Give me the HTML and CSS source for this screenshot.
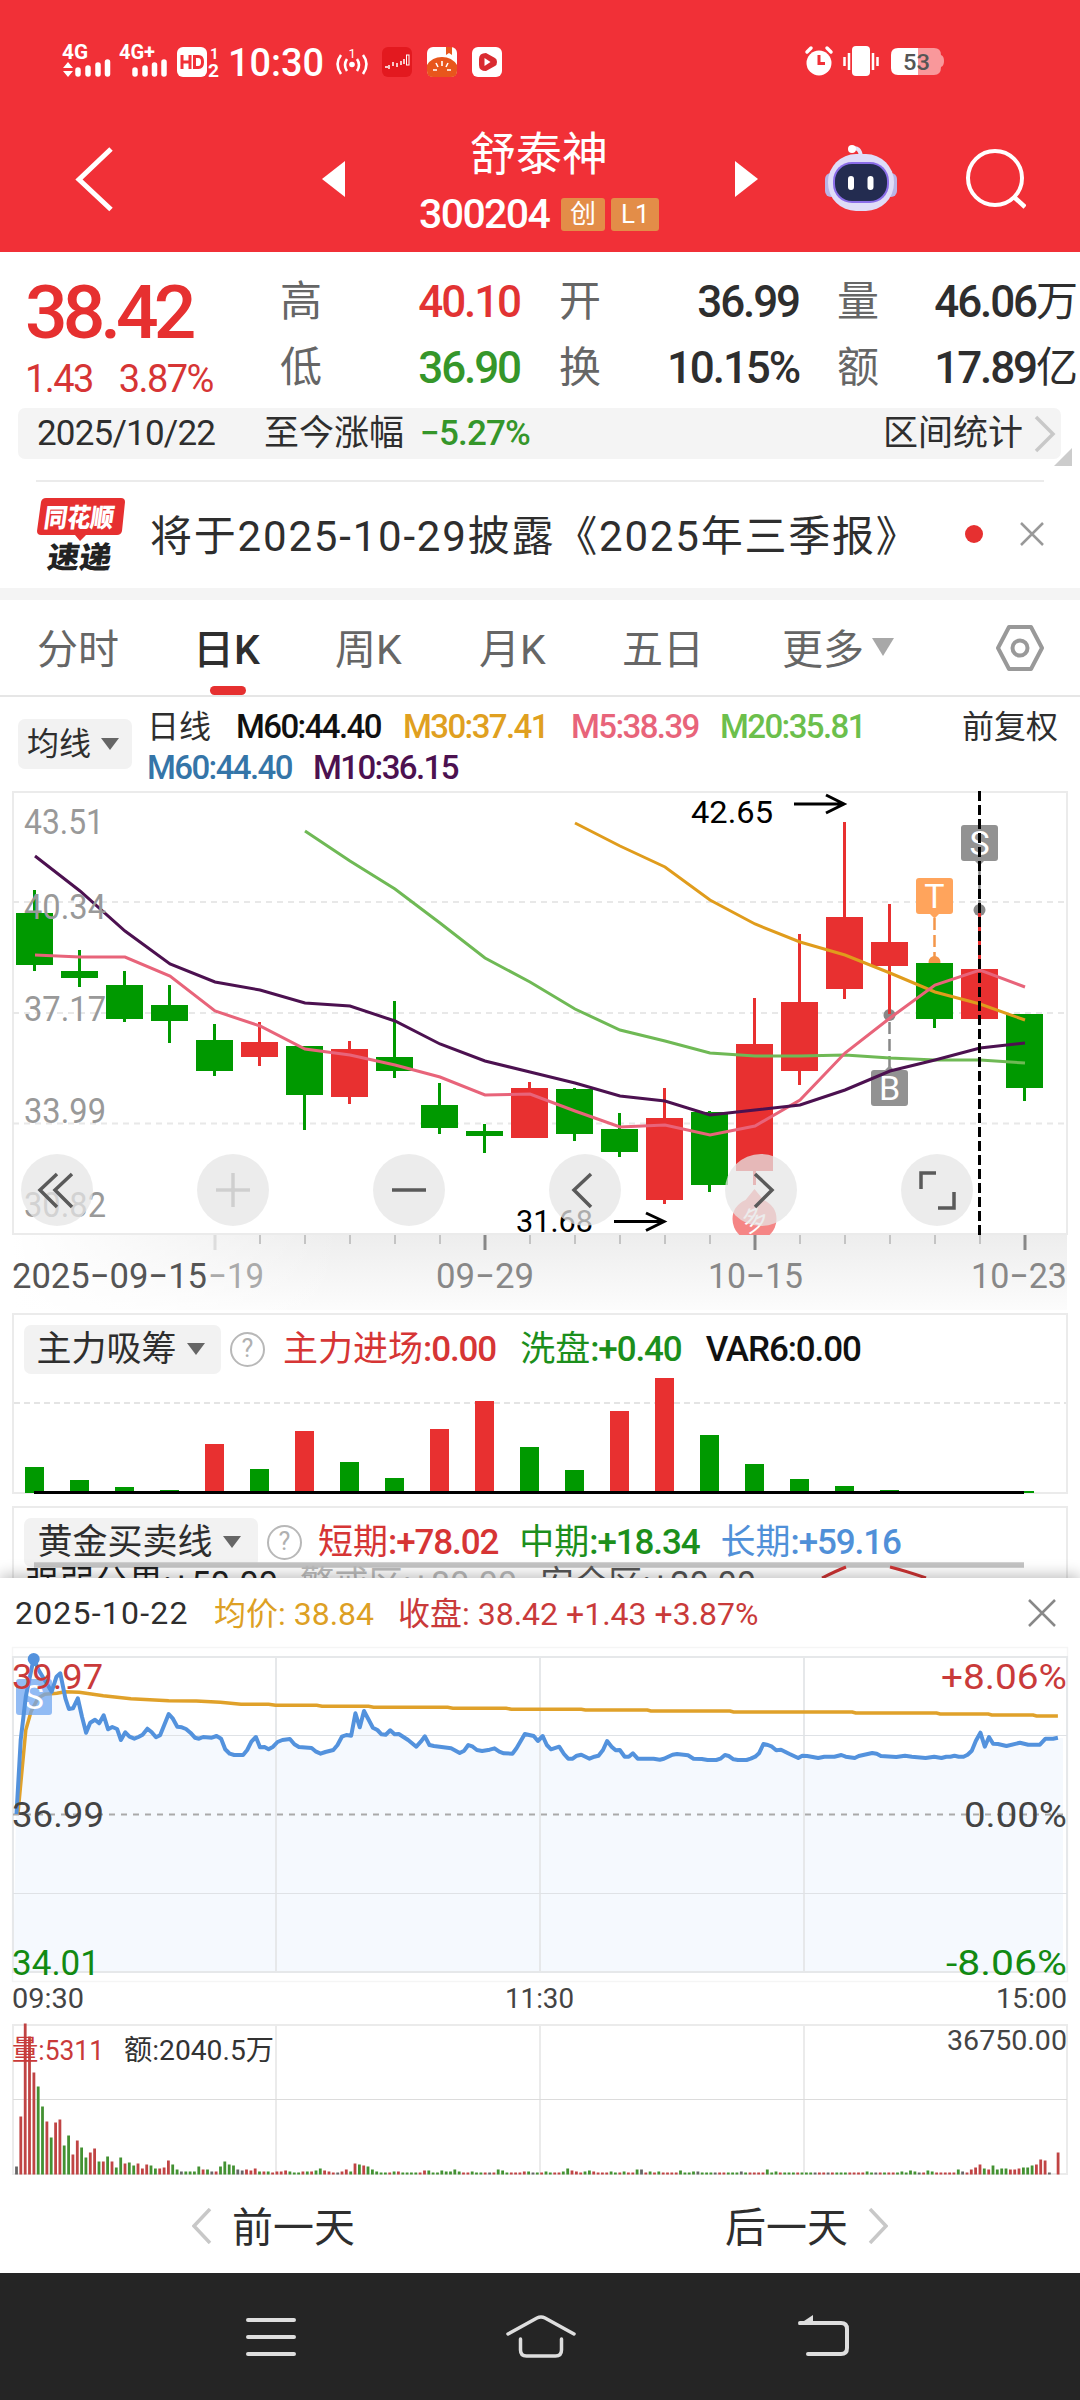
FILE: index.html
```html
<!DOCTYPE html>
<html lang="zh-CN">
<head>
    <meta charset="UTF-8">
    <meta name="viewport" content="width=device-width, initial-scale=1.0">
    <title>舒泰神 300204</title>
    <link rel="stylesheet" href="styles.css">
</head>
<body>
    <header class="top">
        <div class="status-bar">
            <svg class="status-left" viewBox="60 30 450 60" width="450" height="60">
                <g fill="#fff" font-weight="700" font-size="20">
                    <text x="62" y="58" textLength="26" lengthAdjust="spacingAndGlyphs">4G</text>
                    <text x="119" y="58" textLength="36" lengthAdjust="spacingAndGlyphs">4G+</text>
                </g>
                <path fill="#fff" d="M63 67l5-6 5 6zM63 70h10l-5 6z"/>
                <path stroke="#fff" stroke-width="5.500" stroke-linecap="round" d="M78 69v4M88 67v6M98 64v9M107.500 61v12M135 69v4M145 67v6M154.500 64v9M164 61v12"/>
                <rect x="177" y="46" width="30" height="30" rx="6" fill="#fff"/>
                <path fill="none" stroke="#f13037" stroke-width="3" d="M182 54v14M182 61h7M190 54v14M194.500 55.500h4q4 0 4 5.500t-4 5.500h-4z"/>
                <text x="210" y="58" font-size="15" font-weight="700" fill="#fff">1</text>
                <text x="208" y="76" font-size="19" font-weight="700" fill="#fff" textLength="11" lengthAdjust="spacingAndGlyphs">2</text>
                <text x="228" y="75" font-size="39" font-weight="500" fill="#fff" textLength="96" lengthAdjust="spacingAndGlyphs">10:30</text>
                <g fill="none" stroke="#fff" stroke-width="2.600">
                    <path d="M341 54q-7 9 0 19M347 58q-4 6 0 12M363 54q7 9 0 19M357 58q4 6 0 12"/>
                </g>
                <circle cx="352" cy="63.500" r="2.800" fill="#fff"/>
                <text x="348.500" y="57" font-size="13" fill="#fff">1</text>
                <rect x="382" y="46" width="30" height="30" rx="6" fill="#e3191f"/>
                <path fill="none" stroke="#fff" stroke-width="1.500" d="M385 66h3M389 64v4M393 61v4M397 62v4M401 60v4M404 58v5"/>
                <rect x="406.500" y="54" width="2.500" height="10" fill="none" stroke="#fff"/>
                <rect x="427" y="46" width="30" height="30" rx="6" fill="#fff"/>
                <path fill="#e8561c" d="M427 64q5-8 15-8t15 8v6q0 6-6 6h-18q-6 0-6-6zM446 46h6v8l-3-2-3 2z"/>
                <path fill="none" stroke="#fff" stroke-width="1.600" d="M442 60v5M436 62l2 4M448 62l-2 4M433 69h4M447 69h4"/>
                <rect x="472" y="46" width="30" height="30" rx="6" fill="#fff"/>
                <path fill="#d92b30" d="M486 52l9 5q2 1 2 4t-2 4l-9 5q-7 0-7-6v-6q0-6 7-6z"/>
                <path fill="#fff" d="M484.500 57l6 4-6 4z"/>
            </svg>
            <svg viewBox="800 40 150 42" width="150" height="42">
                <circle cx="819" cy="63" r="12.500" fill="#fff"/>
                <path fill="none" stroke="#fff" stroke-width="3.500" stroke-linecap="round" d="M807 52l4-4M831 52l-4-4"/>
                <path fill="none" stroke="#f13037" stroke-width="3" d="M819 55v8.500h6"/>
                <rect x="852" y="46" width="18" height="30" rx="4" fill="#fff"/>
                <path stroke="#fff" stroke-width="2.500" d="M849 53v17M844.500 57v9M873 53v17M877.500 57v9"/>
                <path fill="#f9989b" d="M917 48h17q7 0 7 7 3 1 3 6t-3 6q0 8-7 8h-17z"/>
                <path fill="#fff" d="M898 48h20v27h-20q-7 0-7-7v-13q0-7 7-7z"/>
                <text x="903" y="69.500" font-size="22" font-weight="500" fill="#555" textLength="27" lengthAdjust="spacingAndGlyphs">53</text>
            </svg>
        </div>
        <div class="title-bar">
            <svg width="40" height="66" viewBox="75 144 40 66"><path fill="none" stroke="#fff" stroke-width="5" d="M111 147L79 177.500l32 30"/></svg>
            <svg width="24" height="38" viewBox="322 161 24 38"><path fill="#fff" d="M345 162v36l-23-18z"/></svg>
            <div class="title">
                <h1>舒泰神</h1>
                <div class="code">
                    <span class="num">300204</span>
                    <i class="tag">创</i>
                    <i class="tag tag-l1">L1</i>
                </div>
            </div>
            <svg width="24" height="38" viewBox="735 161 24 38"><path fill="#fff" d="M735 162v36l23-18z"/></svg>
            <svg class="robot" width="74" height="70" viewBox="825 143 74 70">
                <path fill="none" stroke="#e4e4fa" stroke-width="4" d="M852 148q8-3 9 8"/>
                <circle cx="852" cy="148" r="4" fill="#fff"/>
                <rect x="825" y="172" width="12" height="24" rx="6" fill="#b9b4e6"/>
                <rect x="885" y="172" width="12" height="24" rx="6" fill="#b9b4e6"/>
                <rect x="828" y="153" width="66" height="57" rx="28" fill="#dfdcf8"/>
                <rect x="833" y="161" width="56" height="41" rx="19" fill="#8a6de8"/>
                <rect x="835" y="163" width="52" height="37" rx="17" fill="#232c50"/>
                <path stroke="#fff" stroke-width="6" stroke-linecap="round" d="M851 178v8M870.500 178v8"/>
            </svg>
            <svg width="62" height="64" viewBox="963 148 62 64"><circle cx="994" cy="179" r="27" fill="none" stroke="#fff" stroke-width="4"/><path stroke="#fff" stroke-width="4.500" d="M1013 198l11 10"/></svg>
        </div>
    </header>

    <section class="quote">
        <div class="price">
            <b>38.42</b>
            <p><span>1.43</span><span>3.87%</span></p>
        </div>
        <div class="stats">
            <label>高</label><span class="up">40.10</span>
            <label>开</label><span>36.99</span>
            <label>量</label><span>46.06<em>万</em></span>
            <label>低</label><span class="down">36.90</span>
            <label>换</label><span>10.15%</span>
            <label>额</label><span>17.89<em>亿</em></span>
        </div>
    </section>

    <div class="range">
        <span class="range-date">2025/10/22</span>
        <span class="range-label">至今涨幅</span>
        <span class="range-value down">−5.27%</span>
        <span class="range-link">区间统计</span>
        <svg width="22" height="38" viewBox="0 0 22 38"><path fill="none" stroke="#c8c8c8" stroke-width="3.500" d="M2 2l17 17L2 36"/></svg>
        <i class="corner"></i>
    </div>

    <div class="notice">
        <svg class="notice-logo" width="90" height="76" viewBox="36 496 90 76">
            <path fill="#e63030" d="M46 498h75q4 0 4 4l-3 29q-1 4-5 4H86l-6 6-5-6H41q-4 0-4-4l4-29q1-4 5-4z"/>
            <g transform="skewX(-8)" font-weight="900">
                <text x="117" y="527" font-size="26" fill="#fff" textLength="70" lengthAdjust="spacingAndGlyphs">同花顺</text>
                <text x="126" y="568" font-size="30" fill="#222" textLength="64" lengthAdjust="spacingAndGlyphs">速递</text>
            </g>
        </svg>
        <p>将于2025-10-29披露《2025年三季报》</p>
        <i class="dot"></i>
        <svg width="24" height="24" viewBox="0 0 24 24"><path stroke="#999" stroke-width="2.500" d="M1 1l22 22M23 1L1 23"/></svg>
    </div>

    <nav class="tabs">
        <a>分时</a>
        <a class="active">日K</a>
        <a>周K</a>
        <a>月K</a>
        <a>五日</a>
        <a>更多<i class="caret"></i></a>
        <svg width="50" height="48" viewBox="0 0 50 48"><path fill="none" stroke="#999" stroke-width="4" stroke-linejoin="round" d="M14 3h22l11 21-11 21H14L3 24z"/><circle cx="25" cy="24" r="7.500" fill="none" stroke="#999" stroke-width="4"/></svg>
    </nav>

    <div class="ma-legend">
        <button class="pick">均线<i class="caret"></i></button>
        <div class="ma-list">
            <span class="plain">日线</span>
            <span class="black">M60:44.40</span>
            <span class="gold">M30:37.41</span>
            <span class="pink">M5:38.39</span>
            <span class="lime">M20:35.81</span>
            <span class="plain adjust">前复权</span>
            <span class="blue">M60:44.40</span>
            <span class="purple">M10:36.15</span>
        </div>
    </div>

    <section class="kline">
        <svg id="kline" viewBox="0 790 1080 522" width="1080" height="522">
            <defs>
                <linearGradient id="axisBg" x1="0" y1="0" x2="0" y2="1"><stop offset="0" stop-color="#ededed"/><stop offset="1" stop-color="#fcfcfc"/></linearGradient>
                <linearGradient id="axisFade"><stop offset="0" stop-color="#fff"/><stop offset="1" stop-color="#fff" stop-opacity="0"/></linearGradient>
                <clipPath id="plot"><rect x="13" y="790" width="1054" height="445"/></clipPath>
            </defs>
            <rect x="13" y="1234" width="1054" height="76" fill="url(#axisBg)"/>
            <rect x="12" y="1235" width="330" height="76" fill="url(#axisFade)"/>
            <rect x="13" y="792" width="1054" height="442" fill="#fff" stroke="#ebebeb" stroke-width="2"/>
            <path stroke="#e8e8e8" stroke-width="2" stroke-dasharray="6 5" d="M13 902h1054M13 1013h1054M13 1123.500h1054"/>
            <g id="markers">
                <path stroke="#888" stroke-width="2.500" stroke-dasharray="12 5" d="M889.500 1022v46M979.500 866v42"/>
                <path stroke="#f4964a" stroke-width="2.500" stroke-dasharray="12 5" d="M934.500 918v42"/>
                <circle cx="889.500" cy="1015" r="6" fill="#888"/>
                <circle cx="979.500" cy="910" r="6" fill="#888"/>
                <circle cx="934.500" cy="962" r="6" fill="#f4964a"/>
                <path fill="#ffa45c" d="M919 878h31q3 0 3 3v30q0 3-3 3h-11l-4.500 4.500-4.500-4.500h-11q-3 0-3-3v-30q0-3 3-3z"/>
                <path fill="#929292" d="M964 825h31q3 0 3 3v30q0 3-3 3h-11l-4.500 4.500-4.500-4.500h-11q-3 0-3-3v-30q0-3 3-3z"/>
                <path fill="#929292" d="M874 1070h11l4.500-4.500 4.500 4.500h11q3 0 3 3v30q0 3-3 3h-31q-3 0-3-3v-30q0-3 3-3z"/>
                <g fill="#fff" font-size="34" text-anchor="middle">
                    <text x="934.500" y="908">T</text>
                    <text x="979.500" y="855">S</text>
                    <text x="889.500" y="1100">B</text>
                </g>
            </g>
            <g clip-path="url(#plot)">
                <path fill="#f58585" d="M754.500 1189l9 11q13 6 13 19a22 22 0 0 1-44 0q0-13 13-19z"/>
                <text class="pin" x="754.500" y="1229" font-size="26" fill="#fff" text-anchor="middle" transform="rotate(-25 754.500 1219)">多</text>
            </g>
            <g id="candles"></g>
            <g id="maLines" fill="none" stroke-width="3"></g>
            <g class="price-axis" font-size="35" fill="#999">
                <text x="24" y="834" textLength="80" lengthAdjust="spacingAndGlyphs">43.51</text>
                <text x="24" y="919" textLength="82" lengthAdjust="spacingAndGlyphs">40.34</text>
                <text x="24" y="1021" textLength="82" lengthAdjust="spacingAndGlyphs">37.17</text>
                <text x="24" y="1123" textLength="82" lengthAdjust="spacingAndGlyphs">33.99</text>
                <text x="24" y="1217" textLength="82" lengthAdjust="spacingAndGlyphs">30.82</text>
            </g>
            <g font-size="31" fill="#000">
                <text x="691" y="823" textLength="82" lengthAdjust="spacingAndGlyphs">42.65</text>
                <text x="516" y="1232" textLength="77" lengthAdjust="spacingAndGlyphs">31.68</text>
            </g>
            <path fill="none" stroke="#000" stroke-width="3" d="M794 804h50M826 795l18 9-18 9M614 1221.500h50M646 1213l18 8.500-18 9"/>
            <path stroke="#000" stroke-width="3" stroke-dasharray="10 4" d="M979.500 791v444"/>
            <g id="ticks"></g>
            <g class="date-axis" font-size="35" fill="#888">
                <text x="208" y="1288" fill="#aaa" textLength="56" lengthAdjust="spacingAndGlyphs">−19</text>
                <text x="436" y="1288" textLength="98" lengthAdjust="spacingAndGlyphs">09−29</text>
                <text x="708" y="1288" textLength="95" lengthAdjust="spacingAndGlyphs">10−15</text>
                <text x="971" y="1288" textLength="96" lengthAdjust="spacingAndGlyphs">10−23</text>
                <text x="12" y="1288" fill="#555" textLength="195" lengthAdjust="spacingAndGlyphs">2025−09−15</text>
            </g>
        </svg>
        <div class="chart-tools">
            <button><svg viewBox="0 0 72 72"><path d="M36 20L19 36l17 17M51 20L34 36l17 17"/></svg></button>
            <button class="disabled"><svg viewBox="0 0 72 72"><path d="M19 36h34M36 19v34"/></svg></button>
            <button><svg viewBox="0 0 72 72"><path d="M19 36h34"/></svg></button>
            <button><svg viewBox="0 0 72 72"><path d="M42 20L25 36l17 17"/></svg></button>
            <button><svg viewBox="0 0 72 72"><path d="M30 20l17 16-17 17"/></svg></button>
            <button><svg viewBox="0 0 72 72"><path d="M20 35V19h15M53 38v16H37"/></svg></button>
        </div>
    </section>

    <section class="indicator">
        <div class="indicator-head">
            <button class="pick">主力吸筹<i class="caret"></i></button>
            <i class="help">?</i>
            <span class="red">主力进场<b>:0.00</b></span>
            <span class="green">洗盘<b>:+0.40</b></span>
            <span class="black"><b>VAR6:0.00</b></span>
        </div>
        <svg id="absorb" viewBox="14 1374 1052 122" width="1052" height="122">
            <path stroke="#dcdcdc" stroke-width="1.500" stroke-dasharray="6 4" d="M14 1403h1052"/>
            <path stroke="#ebebeb" stroke-width="2" d="M12 1493h1056"/>
            <g id="absorbBars"></g>
            <path stroke="#000" stroke-width="3" d="M34 1492.500h990"/>
        </svg>
    </section>

    <section class="indicator gold-line">
        <div class="indicator-head">
            <button class="pick">黄金买卖线<i class="caret"></i></button>
            <i class="help">?</i>
            <span class="red">短期<b>:+78.02</b></span>
            <span class="green">中期<b>:+18.34</b></span>
            <span class="sky">长期<b>:+59.16</b></span>
        </div>
        <svg class="under" viewBox="14 1560 1052 18" width="1052" height="18">
            <path stroke="#c4c4c4" stroke-width="5.500" d="M34 1565h990"/>
            <g font-size="35">
                <text x="25" y="1596" fill="#222" textLength="253" lengthAdjust="spacingAndGlyphs">强弱分界:+50.00</text>
                <text x="300" y="1596" fill="#bbb" textLength="217" lengthAdjust="spacingAndGlyphs">警戒区:+80.00</text>
                <text x="540" y="1596" fill="#555" textLength="216" lengthAdjust="spacingAndGlyphs">安全区:+20.00</text>
            </g>
            <path fill="none" stroke="#c33" stroke-width="3" d="M822 1578q14-7 24-11M890 1567q16 4 36 11"/>
        </svg>
    </section>

    <section class="day-panel">
        <div class="day-head">
            <span class="day-date">2025-10-22</span>
            <span class="day-avg">均价:&nbsp;38.84</span>
            <span class="day-close">收盘:&nbsp;38.42 +1.43 +3.87%</span>
            <svg width="28" height="28" viewBox="0 0 28 28"><path stroke="#888" stroke-width="2.500" d="M1 1l26 26M27 1L1 27"/></svg>
        </div>
        <svg class="day-chart" viewBox="0 1646 1080 536" width="1080" height="536">
            <path fill="none" stroke="#f5f5f5" stroke-width="1.500" d="M12.500 1647.500h1055v334h-1055z"/>
            <g id="dayLines"></g>
            <g font-size="35">
                <text x="12" y="1689" fill="#c93a3a" textLength="91" lengthAdjust="spacingAndGlyphs">39.97</text>
                <text x="12" y="1827" fill="#444" textLength="92" lengthAdjust="spacingAndGlyphs">36.99</text>
                <text x="12" y="1975" fill="#128a12" textLength="88" lengthAdjust="spacingAndGlyphs">34.01</text>
                <text x="941" y="1689" fill="#c93a3a" textLength="126" lengthAdjust="spacingAndGlyphs">+8.06%</text>
                <text x="964" y="1827" fill="#444" textLength="103" lengthAdjust="spacingAndGlyphs">0.00%</text>
                <text x="946" y="1975" fill="#128a12" textLength="121" lengthAdjust="spacingAndGlyphs">-8.06%</text>
            </g>
            <g font-size="28" fill="#444">
                <text x="12" y="2008" textLength="72" lengthAdjust="spacingAndGlyphs">09:30</text>
                <text x="505" y="2008" textLength="69" lengthAdjust="spacingAndGlyphs">11:30</text>
                <text x="996" y="2008" textLength="71" lengthAdjust="spacingAndGlyphs">15:00</text>
            </g>
            <path fill="none" stroke="#ebebeb" stroke-width="2" d="M13 2025h1054v149H13zM276 2025v149M540 2025v149M804 2025v149"/>
            <path stroke="#dcdcdc" stroke-width="1" d="M13 2099.500h1054"/>
            <g id="volumeBars"></g>
            <g font-size="28">
                <text x="12" y="2060" fill="#c93a3a" textLength="92" lengthAdjust="spacingAndGlyphs">量:5311</text>
                <text x="124" y="2060" fill="#333" textLength="150" lengthAdjust="spacingAndGlyphs">额:2040.5万</text>
                <text x="947" y="2050" fill="#444" textLength="120" lengthAdjust="spacingAndGlyphs">36750.00</text>
            </g>
        </svg>
        <div class="day-switch">
            <a><svg width="20" height="36" viewBox="0 0 20 36"><path d="M18 1L2 18l16 17"/></svg><span>前一天</span></a>
            <a><span>后一天</span><svg width="20" height="36" viewBox="0 0 20 36"><path d="M2 1l16 17L2 35"/></svg></a>
        </div>
    </section>

    <footer class="sys-nav">
        <svg viewBox="0 2273 1080 127" width="1080" height="127">
            <g fill="none" stroke="#dedede" stroke-width="4" stroke-linecap="round" stroke-linejoin="round">
                <path d="M248 2320h46M248 2337h46M248 2354h46"/>
                <path stroke-width="3.500" d="M508 2334l29-16q4-2 8 0l29 16M520.500 2339v11q0 6 6 6h29q6 0 6-6v-11"/>
                <path d="M808 2354h33q6 0 6-6v-19q0-6-6-6h-41"/>
            </g>
            <path fill="#dedede" d="M798 2325l15-10v10z"/>
        </svg>
    </footer>

    <script src="charts.js"></script>
</body>
</html>
```

FILE: styles.css
```css
:root {
    --brand: #f13037;
    --red: #d63535;
    --green: #1c8f1c;
    --text: #2e2e2e;
    --muted: #666;
    --line: #ebebeb;
}

* {
    margin: 0;
    padding: 0;
    box-sizing: border-box;
}

body {
    width: 1080px;
    height: 2400px;
    overflow: hidden;
    background: #fff;
    color: var(--text);
    font-family: Roboto, "Noto Sans CJK SC", sans-serif;
}

i, em {
    font-style: normal;
}

button {
    border: none;
    font-family: inherit;
    color: inherit;
}

svg {
    display: block;
}

.up { color: #e23333; }
.down { color: #35962a; }

/* header */
.top {
    height: 252px;
    background: var(--brand);
    color: #fff;
}

.status-bar {
    display: flex;
    justify-content: space-between;
    align-items: center;
    height: 122px;
    padding: 0 130px 0 60px;
}

.title-bar {
    display: grid;
    grid-template-columns: 247px 97px 316px 90px 139px 1fr;
    align-items: center;
    height: 114px;
    padding-left: 75px;
}

.title {
    width: 240px;
    margin-top: 5px;
}

.title h1 {
    font-size: 46px;
    font-weight: 400;
    line-height: 54px;
    text-align: center;
}

.title-bar svg {
    margin-top: -6px;
}

.code {
    display: flex;
    align-items: center;
    gap: 6px;
    height: 56px;
    margin-top: 5px;
}

.code .num {
    width: 137px;
    font-size: 41px;
    font-weight: 500;
    letter-spacing: -1.6px;
}

.tag {
    width: 45px;
    height: 33px;
    border-radius: 3px;
    background: #e38d48;
    font-size: 26px;
    line-height: 33px;
    text-align: center;
}

.tag-l1 {
    width: 48px;
}

/* quote */
.quote {
    display: flex;
    height: 156px;
    white-space: nowrap;
}

.price {
    width: 281px;
    padding: 20px 0 0 25px;
    color: #e63030;
}

.price b {
    display: block;
    font-size: 75px;
    font-weight: 500;
    line-height: 81px;
    letter-spacing: -5px;
}

.price p {
    display: flex;
    gap: 26px;
    margin-top: 4px;
    color: var(--red);
    font-size: 38px;
    line-height: 44px;
    letter-spacing: -1.6px;
}

.stats {
    display: grid;
    grid-template-columns: 42px 198px 81px 198px 80px 199px;
    grid-template-rows: 66px 66px;
    align-items: center;
    padding-top: 17px;
    margin-left: -1px;
}

.stats label {
    justify-self: end;
    color: var(--muted);
    font-size: 42px;
    line-height: 60px;
}

.stats span {
    display: flex;
    align-items: center;
    justify-content: flex-end;
    font-size: 44px;
    font-weight: 500;
    letter-spacing: -2.1px;
}

.stats em {
    font-size: 42px;
    font-weight: 400;
    letter-spacing: 0;
    line-height: 60px;
}

/* range bar */
.range {
    position: relative;
    display: grid;
    grid-template-columns: 227px 156px 463px 151px 1fr;
    align-items: center;
    height: 51px;
    margin: 0 19px 0 18px;
    padding-left: 19px;
    border-radius: 7px;
    background: #f4f4f4;
    font-size: 35px;
    line-height: 50px;
    white-space: nowrap;
}

.range-date {
    letter-spacing: -0.8px;
}

.range-value {
    font-weight: 500;
    letter-spacing: -0.8px;
}

.corner {
    position: absolute;
    right: -11px;
    bottom: -7px;
    border-left: 18px solid transparent;
    border-bottom: 18px solid #ccc;
}

/* notice */
.notice {
    display: flex;
    align-items: center;
    height: 108px;
    margin: 21px 36px 0;
    padding-bottom: 2px;
    border-top: 2px solid var(--line);
}

.notice p {
    width: 839px;
    padding-left: 24px;
    margin-top: -3px;
    font-size: 42px;
    letter-spacing: 1.8px;
    white-space: nowrap;
}

.notice .dot {
    width: 18px;
    height: 18px;
    margin-right: 37px;
    border-radius: 50%;
    background: #e63030;
}

/* tabs */
.tabs {
    display: grid;
    grid-template-columns: 156px 142px 144px 143px 160px 213px 1fr;
    align-items: center;
    height: 109px;
    padding-left: 37px;
    padding-bottom: 3px;
    border-top: 12px solid #f4f4f4;
    border-bottom: 2px solid #e6e6e6;
    color: var(--muted);
    font-size: 41px;
}

.tabs svg {
    margin-top: 4px;
}

.tabs .active {
    position: relative;
    color: var(--text);
    font-weight: 500;
}

.tabs .active::after {
    content: "";
    position: absolute;
    left: 17px;
    bottom: -19px;
    width: 36px;
    height: 9px;
    border-radius: 5px;
    background: #e63030;
}

.caret {
    display: inline-block;
    margin: -5px 0 0 10px;
    border: 9px solid transparent;
    border-top: 12px solid #666;
    border-bottom: none;
    vertical-align: middle;
}

.tabs .caret {
    margin: -12px 0 0 8px;
    border-width: 18px 11px 0;
    border-top-color: #a8a8a8;
}

/* moving average legend */
.ma-legend {
    display: flex;
    height: 93px;
    padding-left: 18px;
}

.pick {
    height: 49px;
    padding-right: 4px;
    border-radius: 7px;
    background: #f2f2f2;
    font-size: 35px;
    line-height: 49px;
    white-space: nowrap;
}

.ma-legend .pick {
    width: 114px;
    height: 50px;
    margin-top: 22px;
    font-size: 32px;
}

.ma-list {
    display: grid;
    grid-template-columns: 89px 167px 168px 149px 242px 110px;
    grid-template-rows: 41px 41px;
    align-items: center;
    margin: 9px 0 0 15px;
    font-size: 33px;
    font-weight: 500;
    letter-spacing: -1.6px;
    white-space: nowrap;
}

.ma-list .plain {
    font-size: 32px;
    font-weight: 400;
    letter-spacing: 0;
    line-height: 40px;
}

.ma-list .blue { grid-column: 1; }
.ma-list .purple { grid-column: 2; margin-left: 77px; }

.black { color: #111; }
.gold { color: #e0a020; }
.pink { color: #e8647a; }
.lime { color: #6cbf4c; }
.blue { color: #3575a8; }
.purple { color: #4c1150; }
.red { color: var(--red); }
.green { color: var(--green); }
.sky { color: #5090d8; }

/* k-line */
.kline {
    position: relative;
    height: 522px;
}

.chart-tools {
    position: absolute;
    left: 21px;
    top: 364px;
    display: flex;
    gap: 104px;
}

.chart-tools button {
    width: 72px;
    height: 72px;
    border-radius: 50%;
    background: rgba(230, 230, 230, 0.75);
}

.chart-tools path {
    fill: none;
    stroke: #5a5a5a;
    stroke-width: 3.5;
}

.chart-tools .disabled path {
    stroke: #cfcfcf;
}

/* indicators */
.indicator {
    height: 181px;
    margin: 1px 12px 0;
    border: 2px solid var(--line);
    border-bottom: none;
}

.indicator-head {
    display: flex;
    align-items: center;
    height: 59px;
    padding: 10px 0 0 10px;
    font-size: 35px;
    white-space: nowrap;
}

.indicator-head .pick {
    width: 197px;
}

.indicator-head span {
    margin-right: 24px;
    line-height: 50px;
}

.indicator-head b {
    font-weight: 500;
    letter-spacing: -1.1px;
}

.help {
    width: 35px;
    height: 35px;
    margin: 0 18px 0 9px;
    border: 2.5px solid #b8b8b8;
    border-radius: 50%;
    color: #b0b0b0;
    font-size: 25px;
    line-height: 30px;
    text-align: center;
}

.gold-line {
    height: 72px;
    margin-top: 12px;
    overflow: hidden;
}

.gold-line .pick {
    width: 234px;
}

.gold-line .help {
    margin-right: 16px;
}

.gold-line span {
    margin-right: 21px;
}

.under {
    margin-top: -7px;
}

/* intraday panel */
.day-panel {
    position: relative;
    height: 695px;
    background: #fff;
    box-shadow: 0 -3px 14px rgba(0, 0, 0, 0.25);
}

.day-head {
    display: grid;
    grid-template-columns: 199px 184px 630px 1fr;
    align-items: center;
    height: 68px;
    padding: 2px 0 0 15px;
    font-size: 32px;
    white-space: nowrap;
}

.day-date { letter-spacing: 1.2px; }

.day-avg,
.day-close {
    margin-top: -4px;
}

.day-avg { color: #dda024; }
.day-close { color: #c93a3a; }

.day-switch {
    display: flex;
    justify-content: space-between;
    align-items: center;
    height: 91px;
    padding: 0 192px 4px;
    font-size: 41px;
}

.day-switch a {
    display: flex;
    align-items: center;
    gap: 20px;
}

.day-switch span {
    margin-top: -4px;
}

.day-switch path {
    fill: none;
    stroke: #c8c8c8;
    stroke-width: 3.5;
}

.sys-nav {
    position: relative;
    height: 127px;
    background: #252525;
}
```

FILE: charts.js
```js
const X0 = 34.5;
const STEP = 45;
const RED = '#e83030';
const GREEN = '#009900';

function put(id, html) {
    document.getElementById(id).innerHTML = html;
}

// wick top, body top, body bottom, wick bottom, rising
const candles = [
    [890, 913, 965, 971, 0], [950, 971, 978, 987, 0], [971, 985, 1019, 1022, 0],
    [985, 1005, 1021, 1043, 0], [1024, 1040, 1071, 1076, 0], [1022, 1042, 1057, 1066, 1],
    [1046, 1046, 1095, 1130, 0], [1041, 1049, 1097, 1104, 1], [1001, 1057, 1071, 1078, 0],
    [1083, 1105, 1128, 1134, 0], [1124, 1131, 1136, 1153, 0], [1082, 1088, 1138, 1138, 1],
    [1088, 1089, 1134, 1141, 0], [1113, 1129, 1152, 1157, 0], [1088, 1118, 1200, 1204, 1],
    [1111, 1112, 1185, 1192, 0], [998, 1044, 1171, 1185, 1], [934, 1002, 1071, 1085, 1],
    [822, 917, 989, 999, 1], [904, 942, 966, 1014, 1], [963, 963, 1019, 1028, 0],
    [912, 969, 1019, 1019, 1], [1014, 1014, 1088, 1101, 0]
];

put('candles', candles.map(([high, top, bottom, low, up], i) => {
    const x = X0 + i * STEP;
    return `<g fill="${up ? RED : GREEN}"><rect x="${x - 1.5}" y="${high}" width="3" height="${low - high}"/>` +
        `<rect x="${x - 18.5}" y="${top}" width="37" height="${bottom - top}"/></g>`;
}).join(''));

const averages = [
    { color: '#6fb955', start: 6, y: [831, 861, 889, 923, 958, 982, 1009, 1030, 1041, 1053, 1056, 1056, 1055, 1058, 1060, 1060, 1063] },
    { color: '#e09c1c', start: 12, y: [823, 846, 867, 900, 924, 942, 955, 973, 992, 1004, 1020] },
    { color: '#e8647a', start: 0, y: [955, 957, 957, 976, 1011, 1026, 1049, 1055, 1065, 1077, 1095, 1094, 1111, 1127, 1125, 1135, 1126, 1100, 1053, 1018, 985, 970, 987] },
    { color: '#4c1150', start: 0, y: [856, 891, 931, 964, 982, 990, 1003, 1006, 1021, 1044, 1061, 1072, 1083, 1096, 1101, 1115, 1110, 1105, 1090, 1071, 1060, 1048, 1043] }
];

put('maLines', averages.map(({ color, start, y }) => {
    const points = y.map((v, i) => `${X0 + 0.5 + (start + i) * STEP},${v}`).join(' ');
    return `<polyline stroke="${color}" points="${points}"/>`;
}).join(''));

let ticks = '';
for (let i = 4; i <= 22; i++) {
    const major = (i - 4) % 6 === 0;
    const color = i === 4 ? '#ddd' : major ? '#888' : '#c4c4c4';
    ticks += `<path stroke="${color}" stroke-width="${major ? 3 : 2}" d="M${X0 + 0.5 + i * STEP} 1235v${major ? 15 : 9}"/>`;
}
put('ticks', ticks);

const absorb = '1467g 1480g 1487g 1490g 1444r 1469g 1431r 1462g 1478g 1429r 1401r 1447g 1470g 1411r 1378r 1435g 1464g 1479g 1486g 1490g 1493g 1491g 1491g';
put('absorbBars', absorb.split(' ').map((item, i) => {
    const y = parseInt(item);
    return `<rect x="${X0 - 9.5 + i * STEP}" y="${y}" width="19" height="${1493 - y}" fill="${item.endsWith('r') ? RED : GREEN}"/>`;
}).join(''));

// intraday lines, x runs 0-3136 over the full width, y from the top of the panel
const price = '48,552 60,330 75,200 98,85 112,120 150,185 164,140 175,130 190,205 200,237 212,235 226,205 238,260 250,308 262,278 276,269 288,280 301,256 314,298 326,291 340,297 351,330 364,307 376,320 390,326 402,321 414,314 428,296 440,306 453,322 465,316 490,252 502,266 515,290 528,292 540,297 553,308 566,323 578,326 590,321 615,323 629,318 642,326 654,358 667,371 680,375 706,375 718,360 730,335 743,321 755,352 768,351 780,358 793,350 806,336 820,330 842,327 855,343 868,351 905,354 918,365 931,371 945,366 968,360 980,345 993,320 1006,315 1020,317 1032,250 1045,292 1057,243 1083,293 1096,300 1108,313 1120,314 1133,301 1146,313 1158,312 1185,330 1209,350 1222,335 1234,319 1247,345 1260,348 1310,355 1335,369 1348,362 1360,345 1373,350 1385,360 1400,363 1422,359 1436,355 1450,365 1463,370 1488,371 1500,355 1524,312 1550,318 1562,333 1576,318 1588,345 1600,358 1624,350 1638,372 1650,386 1663,386 1675,377 1688,374 1712,386 1726,380 1738,377 1751,360 1763,333 1776,350 1788,361 1800,360 1814,380 1826,380 1838,370 1852,386 1898,386 1916,389 1928,386 1953,374 1966,372 1998,376 2014,386 2038,387 2055,390 2080,390 2092,386 2105,375 2116,378 2130,388 2143,390 2168,390 2180,386 2193,380 2204,370 2217,342 2230,345 2242,350 2254,361 2268,359 2293,372 2318,384 2330,377 2344,378 2376,384 2394,380 2423,380 2443,375 2456,380 2482,384 2494,378 2533,369 2546,371 2558,378 2603,381 2628,377 2648,380 2688,384 2713,380 2734,384 2748,380 2760,380 2772,377 2784,380 2798,380 2810,374 2822,362 2834,332 2847,308 2860,350 2872,321 2884,341 2898,342 2923,348 2962,338 2986,344 3020,344 3036,326 3058,326 3072,323';
const average = '52,552 75,300 90,245 110,205 130,193 165,190 190,185 230,187 300,197 380,206 490,212 570,213 640,217 700,223 780,223 800,226 920,226 935,229 1070,229 1085,232 1300,232 1315,235 1470,235 1485,238 1688,238 1700,240 1880,240 1890,243 2120,243 2130,246 2475,246 2485,249 2720,249 2730,252 2870,252 2880,255 3000,255 3010,258 3072,258';

function scale(points) {
    return points.split(' ').map(p => {
        const [x, y] = p.split(',').map(Number);
        return `${(x / 2.904).toFixed(1)},${(1630 + y / 3).toFixed(1)}`;
    }).join(' ');
}

put('dayLines', `
    <polygon fill="#f5f9fe" points="13,1972 16,1814 ${scale(price)} 1063,1738 1063,1972"/>
    <path fill="none" stroke="#e6e8ea" stroke-width="2" d="M13 1657h1054v315H13zM276 1657v315M540 1657v315M804 1657v315"/>
    <path stroke="#dfe2e6" stroke-width="1" d="M13 1735.500h1054M13 1893.500h1054"/>
    <path stroke="#aaa" stroke-width="2" stroke-dasharray="6 6" d="M13 1814.500h1054"/>
    <polyline fill="none" stroke="#e0a12a" stroke-width="3.500" points="${scale(average)}"/>
    <rect x="16" y="1679" width="36" height="36" rx="3" fill="#6fa6f0" fill-opacity="0.75"/>
    <text x="34" y="1709" font-size="33" fill="#fff" text-anchor="middle">S</text>
    <polyline fill="none" stroke="#5392dd" stroke-width="4" stroke-linejoin="round" points="${scale(price)}"/>
    <circle cx="33.700" cy="1659" r="6" fill="#5392dd"/>`);

const early = '8k 58r 151r 138r 102r 88g 68g 53r 37g 52r 55r 29g 39g 20r 34r 27g 17g 22r 26r 13g 13r 18g 13r 7g 17g 11r 12g 9g 11r 6r 10r 9g 6g 6r 7r 14r 10g 5g 3k 3g 3g 3g 8g 5r 5g 3k 3r 8g 13g 10g 9g 5k 4k 5r 4r 6r 3g 3r 3g 2r 3r 3r 4r 3g 2g 2g 3r 3g 3r 4g 6g 4r 3r 2r 2k 3r 5r 3g 11r 10g 9r 8g 5g 3g 2g 2g 2r 3g 3r 2g 2g 2g 2g 2r 4r 4g 2g 2g 4g 3g 3g 5g 3g 2r 2r 3g 2g 2g 2r 2k 2r 5g 4g 2g 2r 2r 2r 3r 3g 2k 2g'.split(' ');
const midday = '2r 3g 2g 2r 2r 3g 6g 4r 3r 2r 3g 4g 3r 2r 2r 2r 3g 2g 2r 3g 2r 2r 5g 5k 2r 3g 2r 3g 2r 2r 2r 2r 4g 2g 2g 3g 3k 2g 2g 2g 2k 2r 2r 2g 2g 2g 3k 2g 2r 2r 2r 2r 5g 2g 3g 2r'.split(' ');
const late = '5g 3k 2r 5r 7r 10r 6g 5r 9g 5g 6g 6g 5r 5r 6r 7g 7g 9g 10r 15r 14r 2k 0k 22r'.split(' ');
const quiet = '2g 2g 2g 2r 2g 2g 2g 2k 2r 2r 2k 2r 2g 2g 2g 2r 2r 2r 2r 3g 2g 2k 2r 2g 2r 2r 2g 3g 2g 4g 3g 2k 2r 4g 3g 2r 2r 2r 2r 2r'.split(' ');
const volume = [...early, ...midday, ...quiet, ...late];
const volumeColors = { r: '#c04444', g: '#439132', k: '#666' };

put('volumeBars', volume.map((item, i) => {
    const h = parseInt(item);
    return `<rect x="${(15.1 + i * 4.34).toFixed(1)}" y="${2174.5 - h}" width="2.8" height="${h}" fill="${volumeColors[item.slice(-1)]}"/>`;
}).join(''));
```
